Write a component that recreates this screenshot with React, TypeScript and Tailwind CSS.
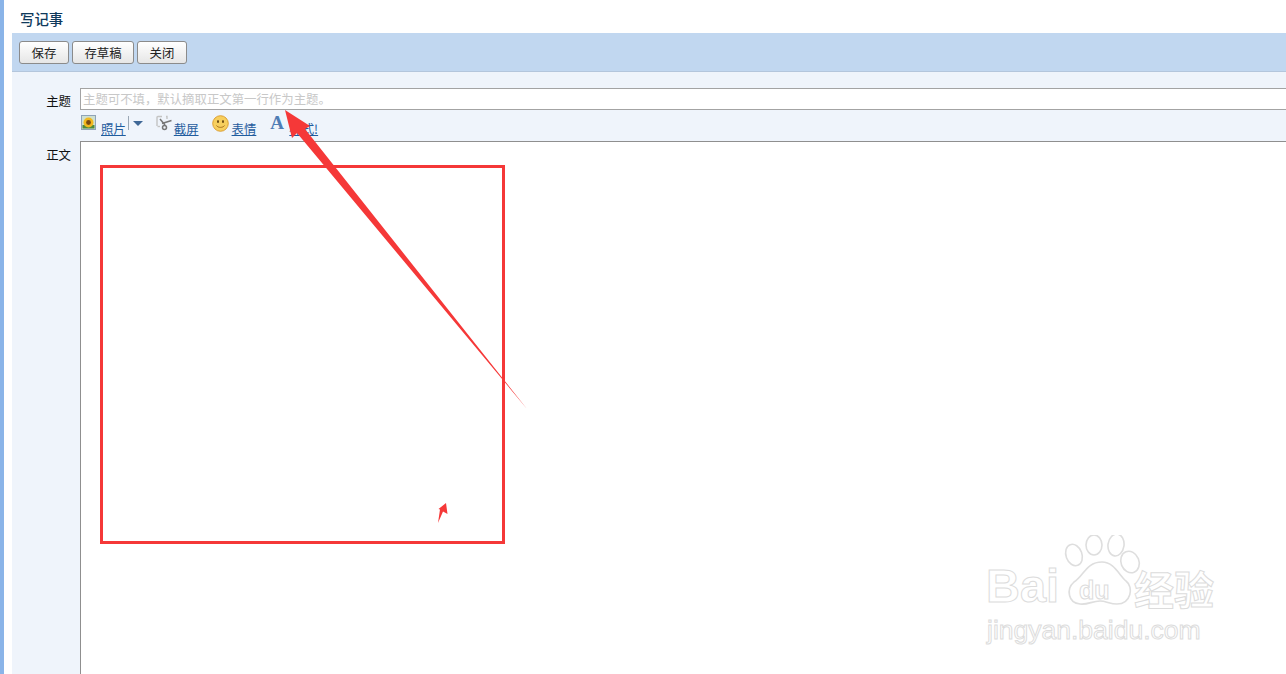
const cjk = "font-['Noto_Sans_CJK_SC','Liberation_Sans',sans-serif]";

function SunflowerIcon() {
  return (
    <svg width="15" height="15" viewBox="0 0 15 15" className="shrink-0">
      <rect x="0.5" y="0.5" width="14" height="14" fill="#cfe0d0" stroke="#8fa3b8" />
      <rect x="1.5" y="10" width="12" height="3.5" fill="#4f8a3c" />
      <circle cx="7.5" cy="7.5" r="5" fill="#f2b91e" />
      <circle cx="7.5" cy="7.5" r="2.4" fill="#7a4a12" />
    </svg>
  );
}

function ScissorsIcon() {
  return (
    <svg width="16" height="16" viewBox="0 0 16 16" className="shrink-0">
      <path d="M1 11V2.5A1 1 0 0 1 2 1.500H6M10 1.500H11V4" fill="none" stroke="#c4c4c4" strokeWidth="1.400" />
      <path d="M1.500 11.500H4" stroke="#c4c4c4" strokeWidth="1.400" />
      <path d="M15.500 5.500L6 8.500M4 4L9 10" stroke="#777" strokeWidth="1.500" fill="none" />
      <circle cx="8.500" cy="12.500" r="2" fill="none" stroke="#777" strokeWidth="1.500" />
      <path d="M9 10V11" stroke="#777" strokeWidth="1.500" />
    </svg>
  );
}

function SmileyIcon() {
  return (
    <svg width="17" height="17" viewBox="0 0 17 17" className="shrink-0">
      <circle cx="8.500" cy="8.500" r="7.800" fill="#f7cf5e" stroke="#d99a2b" strokeWidth="0.900" />
      <ellipse cx="6" cy="6.500" rx="1" ry="1.500" fill="#6a4a12" />
      <ellipse cx="11" cy="6.500" rx="1" ry="1.500" fill="#6a4a12" />
      <path d="M4.500 10.500C6 13 11 13 12.500 10.500" fill="none" stroke="#a8701c" strokeWidth="1" />
    </svg>
  );
}

function ToolLink({ children }: { children: React.ReactNode }) {
  return <span className="text-[12.4px] leading-[16px] text-[#1f5c9e] underline">{children}</span>;
}

function PawMark() {
  return (
    <svg width="82" height="92" viewBox="0 0 82 92" className="absolute left-[1062px] top-[535px]">
      <g fill="#fff" stroke="#dedede" strokeWidth="1.600">
        <ellipse cx="8" cy="14" rx="0" ry="0" />
        <ellipse cx="12" cy="20" rx="8" ry="11" transform="rotate(-20 12 20)" />
        <ellipse cx="32" cy="10" rx="8" ry="10" />
        <ellipse cx="54" cy="10" rx="8" ry="11" transform="rotate(8 54 10)" />
        <ellipse cx="68" cy="27" rx="9" ry="11" transform="rotate(-22 68 27)" />
        <path d="M40 27C52 27 57 40 64 46C72 52 69 69 55 69C48 69 44 66 38 66C30 66 26 70 18 69C6 68 4 54 12 47C22 41 24 27 40 27Z" />
      </g>
    </svg>
  );
}

function Watermark() {
  return (
    <>
      <PawMark />
      <span className="absolute left-[986px] top-[556px] font-['Liberation_Sans',sans-serif] text-[47px] leading-[60px] font-bold text-white [-webkit-text-stroke:1px_#dcdcdc]">
        Bai
      </span>
      <span className="absolute left-[1079px] top-[575px] font-['Liberation_Sans',sans-serif] text-[25px] leading-[30px] font-bold text-white [-webkit-text-stroke:1px_#dcdcdc]">
        du
      </span>
      <span className={`absolute left-[1134px] top-[563px] ${cjk} text-[40px] leading-[50px] font-bold text-white [-webkit-text-stroke:1px_#dcdcdc]`}>
        经验
      </span>
      <span className="absolute left-[987px] top-[612px] font-['Liberation_Sans',sans-serif] text-[26.500px] leading-[36px] text-white [-webkit-text-stroke:1px_#dcdcdc]">
        jingyan.baidu.com
      </span>
    </>
  );
}

function Annotations() {
  return (
    <svg width="1286" height="674" viewBox="0 0 1286 674" className="absolute left-0 top-0 pointer-events-none">
      <rect x="101.500" y="166.500" width="402" height="376" fill="none" stroke="#f53838" strokeWidth="3" />
      <polygon
        points="285,110 310,126 305,129 527,409 297,133 292,138"
        fill="#f53838"
      />
      <polygon points="446,503 447.500,514 443,511.500 438,523 440,509.500 438.500,509" fill="#f53838" />
    </svg>
  );
}

export default function App() {
  return (
    <div className={`relative flex h-[674px] w-[1286px] overflow-hidden bg-white ${cjk}`}>
      {/* left window edge */}
      <div className="w-1 shrink-0 bg-[#8ab4e8]" />
      <div className="flex min-w-0 flex-1 flex-col pl-2">
        <div className="flex h-[33px] shrink-0 items-center pl-2 pt-[4px]">
          <h1 className="text-[14.400px] leading-[18px] font-medium text-[#103a5c]">写记事</h1>
        </div>

        {/* toolbar */}
        <div className="flex h-[39px] shrink-0 items-start gap-[3px] border-b border-[#b4c6dc] bg-[#c1d7f0] pl-[7px] pt-2">
          {["保存", "存草稿", "关闭"].map((label) => (
            <button
              key={label}
              className={`h-[23px] rounded-[3px] border border-[#8b8b8b] bg-gradient-to-b from-white to-[#e6e6e6] text-[12.400px] leading-[20px] text-[#222] ${
                label === "存草稿" ? "w-[62px]" : "w-[50px]"
              }`}
            >
              {label}
            </button>
          ))}
        </div>

        {/* form */}
        <div className="flex min-h-0 flex-1 flex-col bg-[#eff4fb] pt-[16px]">
          <div className="flex h-[22px] shrink-0">
            <label className="w-[59px] pt-[5px] text-right text-[12.400px] leading-[16px] text-[#111]">主题</label>
            <div className="ml-[9px] flex flex-1 items-center border border-r-0 border-[#a3a3a3] bg-white pl-[2px] text-[12.400px] leading-[16px] text-[#c8c8c8]">
              主题可不填，默认摘取正文第一行作为主题。
            </div>
          </div>

          <div className="ml-[69px] flex h-[31px] shrink-0 items-start pt-[5px]">
            <SunflowerIcon />
            <span className="ml-[5px]"><ToolLink>照片</ToolLink></span>
            <span className="ml-[2px] mt-[1px] h-[14px] w-px bg-[#9aa7b5]" />
            <span className="ml-[4px] mt-[6px] h-0 w-0 border-x-[5px] border-t-[5px] border-x-transparent border-t-[#3f6796]" />
            <span className="ml-[13px]"><ScissorsIcon /></span>
            <span className="ml-[2px]"><ToolLink>截屏</ToolLink></span>
            <span className="ml-[13px]"><SmileyIcon /></span>
            <span className="ml-[3px]"><ToolLink>表情</ToolLink></span>
            <span className="ml-[14px] w-[17px] font-['Liberation_Serif',serif] text-[19px] leading-[16px] font-bold text-[#4f7db5]">A</span>
            <span className="ml-[2px]"><ToolLink>样式!</ToolLink></span>
          </div>

          <div className="flex min-h-0 flex-1">
            <label className="w-[59px] pt-[6px] text-right text-[12.400px] leading-[16px] text-[#111]">正文</label>
            <div className="ml-[9px] flex-1 border-l border-t border-[#8f8f8f] bg-white" />
          </div>
        </div>
      </div>

      <Annotations />
      <Watermark />
    </div>
  );
}
